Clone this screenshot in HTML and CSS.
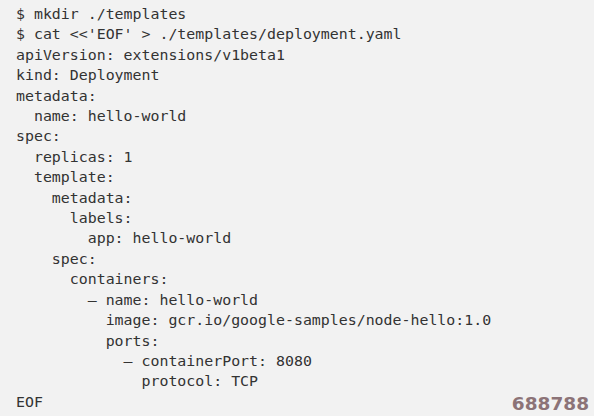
FILE: index.html
```html
<!DOCTYPE html>
<html lang="en">
<head>
<meta charset="utf-8">
<link rel="stylesheet" href="styles.css">
</head>
<body>
<div class="code-block">
<pre class="code">$ mkdir ./templates
$ cat &lt;&lt;'EOF' &gt; ./templates/deployment.yaml
apiVersion: extensions/v1beta1
kind: Deployment
metadata:
  name: hello-world
spec:
  replicas: 1
  template:
    metadata:
      labels:
        app: hello-world
    spec:
      containers:
        – name: hello-world
          image: gcr.io/google-samples/node-hello:1.0
          ports:
            – containerPort: 8080
              protocol: TCP
EOF</pre>
<span class="watermark">688788</span>
</div>
</body>
</html>
```
FILE: styles.css
```css
html, body {
  margin: 0;
  padding: 0;
  background: #f2f2f2;
}
.code-block {
  position: relative;
  width: 594px;
  height: 416px;
  background: #f2f2f2;
  overflow: hidden;
}
.code {
  margin: 0;
  padding: 4px 16px 0 16px;
  font-family: "DejaVu Sans Mono", monospace;
  font-size: 14.9px;
  line-height: 20.4px;
  color: #333333;
}
.watermark {
  position: absolute;
  right: 5px;
  bottom: 3px;
  font-family: "DejaVu Sans", sans-serif;
  font-weight: bold;
  font-size: 18.5px;
  line-height: 1;
  color: #8c7377;
}
```
